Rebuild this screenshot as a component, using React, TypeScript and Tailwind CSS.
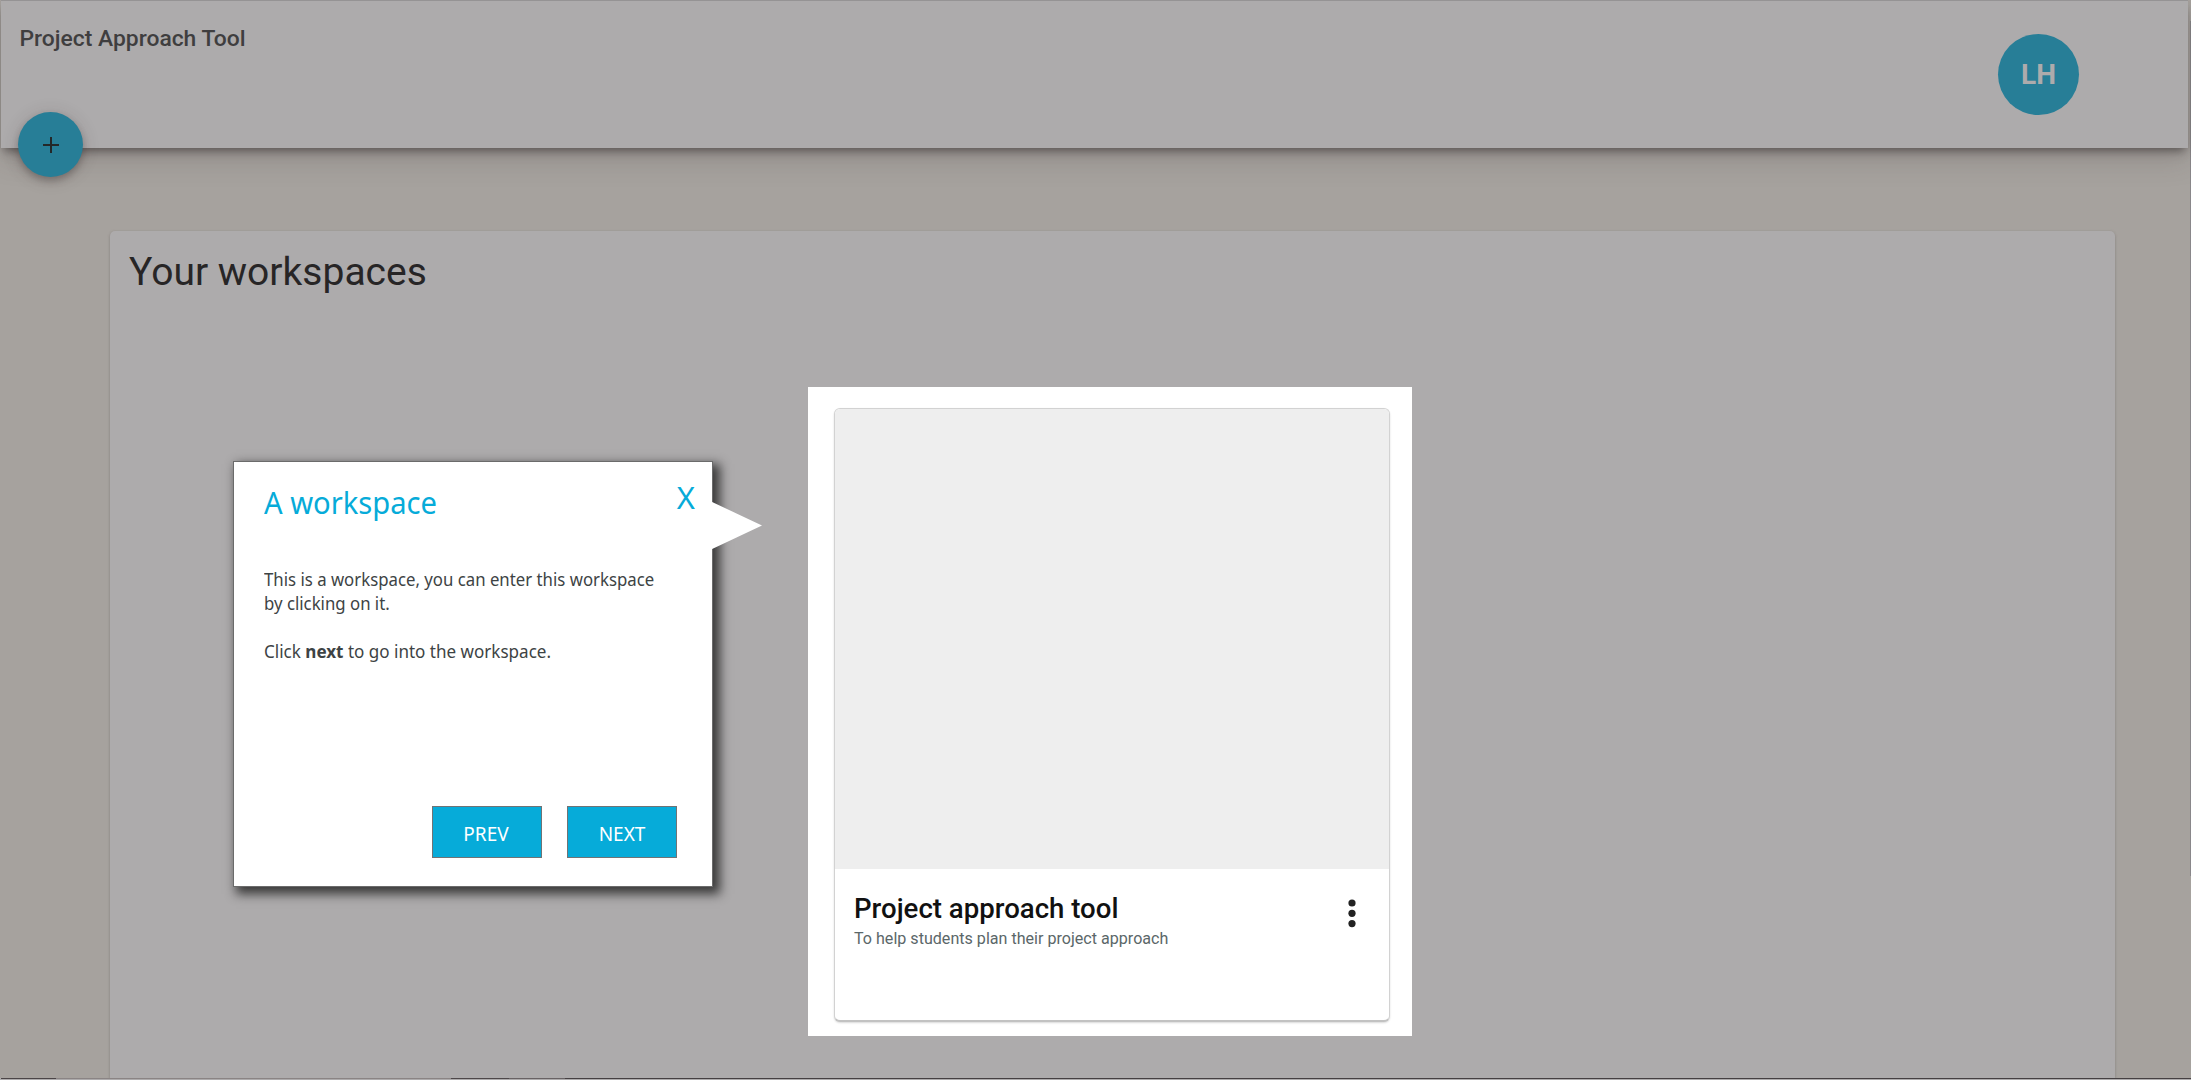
import React from "react";

const roboto = "font-['Roboto',sans-serif]";
const noto = "font-['Noto_Sans',sans-serif]";

function Header() {
  return (
    <header className="relative z-10 ml-px mr-[3px] flex h-[148px] items-start justify-between border-t border-[#959394] bg-[#adabac] pl-[18.5px] pr-[109px] shadow-[0_6px_9px_-3px_rgba(50,45,45,0.6),0_12px_26px_rgba(60,50,50,0.18)]">
      <h1 className={`${roboto} mt-[22px] text-[22.85px] leading-8 font-medium text-[#3f3e3f]`}>Project Approach Tool</h1>
      <div className={`${roboto} mt-[33px] flex size-[81px] items-center justify-center rounded-full bg-[#277e97] pt-px text-[28px] font-bold text-[#adabac]`}>
        LH
      </div>
      <button aria-label="Add workspace" className="absolute left-[17px] top-[111px] flex size-[65px] items-center justify-center rounded-full bg-[#277e97] shadow-[0_4px_7px_rgba(50,40,40,0.32),0_2px_18px_rgba(50,40,40,0.16)]">
        <svg width="18" height="18" viewBox="0 0 18 18" stroke="#242829" strokeWidth="2"><path d="M9 1v16M1 9h16" /></svg>
      </button>
    </header>
  );
}

function TourDialog() {
  return (
    <section className={`${noto} absolute left-[233px] top-[461px] flex h-[426px] w-[480px] flex-col border border-[#6b6b6b] bg-white shadow-[5px_5px_10px_2px_rgba(20,20,20,0.75)]`}>
      <svg className="absolute left-[476px] top-[39px]" width="52" height="50" viewBox="0 0 52 50"><path d="M0 0L52 24.5L0 49Z" fill="#fff" /></svg>
      <div className="flex justify-between pl-[30px] pr-[17px] pt-[19px] text-[#06abd9]">
        <h2 className="origin-left scale-x-[0.94] text-[31px] leading-[42px]">A workspace</h2>
        <button aria-label="Close" className="-mt-[5px] h-[42px] text-[31px] leading-[42px]">X</button>
      </div>
      <div className="mt-[44px] pl-[30px] text-[18px] leading-6 text-[#3d4344]">
        <p className="origin-left scale-x-[0.932] whitespace-nowrap">This is a workspace, you can enter this workspace<br />by clicking on it.</p>
        <p className="mt-6 origin-left scale-x-[0.947]">Click <b>next</b> to go into the workspace.</p>
      </div>
      <div className="mt-auto mb-[28px] flex gap-[25px] self-end pr-[35px] text-[19px] text-white">
        <button className="h-[52px] w-[110px] border border-[#707375] bg-[#06abd9] pr-[2px] pt-[4px]">PREV</button>
        <button className="h-[52px] w-[110px] border border-[#707375] bg-[#06abd9] pt-[4px]">NEXT</button>
      </div>
    </section>
  );
}

function WorkspaceCard() {
  return (
    <article className={`${roboto} absolute left-[808px] top-[387px] h-[649px] w-[604px] bg-white pl-[26px] pt-[21px]`}>
      <div className="flex h-[614px] w-[556px] flex-col overflow-hidden rounded-[6px] border border-b-2 border-[#d2d2d2] border-b-[#c2c2c2] bg-white shadow-[0_1px_2px_rgba(0,0,0,0.15)]">
        <div className="h-[460px] bg-[#eeeeee]" />
        <div className="flex justify-between pl-[19px] pr-[33px] pt-[24px]">
          <div>
            <h3 className="text-[27.6px] leading-8 font-medium text-[#111]">Project approach tool</h3>
            <p className="mt-[2px] text-[16.1px] leading-6 text-[#5b6769]">To help students plan their project approach</p>
          </div>
          <svg className="mt-[5px]" width="8" height="32" viewBox="0 0 8 32" fill="#222"><circle cx="4" cy="5" r="3.6" /><circle cx="4" cy="15.3" r="3.6" /><circle cx="4" cy="25.6" r="3.6" /></svg>
        </div>
      </div>
    </article>
  );
}

export default function App() {
  return (
    <main className="relative flex h-[1080px] w-[2191px] flex-col overflow-hidden bg-[#a6a29e]">
      <Header />
      <section className="ml-[110px] mt-[83px] h-[847px] w-[2005px] rounded-t-[5px] bg-[#adabac] shadow-[0_1px_3px_rgba(80,75,75,0.4)]">
        <h2 className={`${roboto} pl-[19px] pt-[17px] text-[39px] leading-[48px] text-[#272526]`}>Your workspaces</h2>
      </section>
      <footer className="relative flex h-[2px] bg-[#adabac] pb-px pl-px">
        <div className="w-[55px] bg-[#4b4547]" /><div className="w-[395px] bg-[#8a8484]" /><div className="w-[58px] bg-[#4d4749]" /><div className="w-[56px] bg-[#686264]" /><div className="flex-1 bg-[#454042]" />
      </footer>
      <WorkspaceCard />
      <TourDialog />
      <div className="absolute right-0 top-[21px] h-[855px] w-px bg-[#89878a]" />
    </main>
  );
}
